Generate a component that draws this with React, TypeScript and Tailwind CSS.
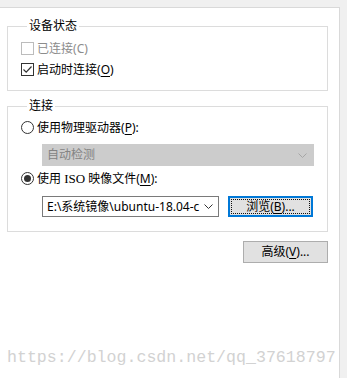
import React from "react";

const ui = { fontFamily: '"Noto Sans", "Noto Sans CJK SC", sans-serif' };

const Key: React.FC<{ k: string; line?: boolean }> = ({ k, line = true }) => (
  <span>
    (<span className={line ? "underline underline-offset-2" : ""}>{k}</span>)
  </span>
);

const CheckBox: React.FC<{ checked?: boolean; disabled?: boolean }> = ({
  checked,
  disabled,
}) => (
  <span
    className={`flex h-[13px] w-[13px] shrink-0 items-center justify-center border bg-white ${
      disabled ? "border-[#bcbcbc]" : "border-[#333333]"
    }`}
  >
    {checked && (
      <svg width="11" height="11" viewBox="0 0 11 11">
        <polyline
          points="1.5,5.5 4.2,8.2 9.5,2.5"
          fill="none"
          stroke="#333333"
          strokeWidth="1.2"
        />
      </svg>
    )}
  </span>
);

const Radio: React.FC<{ checked?: boolean }> = ({ checked }) => (
  <span className="flex h-[13px] w-[13px] shrink-0 items-center justify-center rounded-full border border-[#333333] bg-white">
    {checked && <span className="h-[7px] w-[7px] rounded-full bg-[#333333]" />}
  </span>
);

const Chevron: React.FC<{ color: string }> = ({ color }) => (
  <svg width="9" height="5" viewBox="0 0 9 5">
    <polyline points="0.5,0.5 4.5,4.5 8.5,0.5" fill="none" stroke={color} strokeWidth="1" />
  </svg>
);

export default function App() {
  return (
    <div
      className="relative h-[378px] w-[347px] overflow-hidden bg-[#f0f0f0] pt-[7px] text-[12px] text-black"
      style={ui}
    >
      <div className="h-full w-[340px] border-t border-r border-[#d9d9d9] bg-white pl-[7px] pt-[10px]">
        {/* 设备状态 */}
        <fieldset className="w-[321px] border border-[#dcdcdc] pb-[10px] pl-[13px] pt-[4px]">
          <legend className="ml-[6px] px-[2px] leading-[16px]">设备状态</legend>
          <div className="flex h-[21px] items-center gap-[3px] text-[#8c8c8c] leading-[16px]">
            <CheckBox disabled />
            <span>
              已连接<Key k="C" line={false} />
            </span>
          </div>
          <div className="flex h-[21px] items-center gap-[3px] leading-[16px]">
            <CheckBox checked />
            <span>
              启动时连接<Key k="O" />
            </span>
          </div>
        </fieldset>

        {/* 连接 */}
        <fieldset className="mt-[7px] w-[321px] border border-[#dcdcdc] pb-[14px] pl-[13px] pt-[3px]">
          <legend className="ml-[6px] px-[2px] leading-[16px]">连接</legend>
          <div className="flex h-[21px] items-center gap-[3px] leading-[16px]">
            <Radio />
            <span>
              使用物理驱动器<Key k="P" />:
            </span>
          </div>
          <div className="ml-[21px] mt-[6px] flex h-[22px] w-[272px] items-center justify-between border border-[#cccccc] bg-[#cccccc] pl-[4px] pr-[6px] leading-[16px] text-[#838383]">
            <span>自动检测</span>
            <Chevron color="#a6a6a6" />
          </div>
          <div className="mt-[2px] flex h-[21px] items-center gap-[3px] leading-[16px]">
            <Radio checked />
            <span>
              使用{" "}
              <span style={{ fontFamily: '"Liberation Serif", serif' }} className="text-[13px]">
                ISO
              </span>{" "}
              映像文件<Key k="M" />:
            </span>
          </div>
          <div className="ml-[21px] mt-[7px] flex items-center gap-[9px]">
            <div className="flex h-[21px] w-[177px] items-center border border-[#7a7a7a] bg-white pl-[4px] pr-[5px] leading-[16px]">
              <span className="w-[157px] overflow-hidden whitespace-nowrap">
                E:\系统镜像\ubuntu-18.04-c
              </span>
              <span className="ml-[2px]">
                <Chevron color="#333333" />
              </span>
            </div>
            <button
              className="flex h-[21px] w-[85px] border-2 border-[#0078d7] bg-[#e1e1e1] p-[1px] leading-[16px]"
              style={ui}
            >
              <span className="flex h-full w-full items-center justify-center border border-dotted border-[#111111]">
                浏览<Key k="B" />...
              </span>
            </button>
          </div>
        </fieldset>

        <div className="mt-[9px] flex w-[321px] justify-end">
          <button
            className="flex h-[22px] w-[85px] items-center justify-center border border-[#adadad] bg-[#e1e1e1] leading-[16px]"
            style={ui}
          >
            高级<Key k="V" />...
          </button>
        </div>
      </div>

      <div
        className="absolute left-[7px] top-[349px] whitespace-nowrap text-[16.6px] leading-[17px] text-[#d2d2d2]"
        style={{ fontFamily: '"Liberation Mono", monospace' }}
      >
        https://blog.csdn.net/qq_37618797
      </div>
    </div>
  );
}
